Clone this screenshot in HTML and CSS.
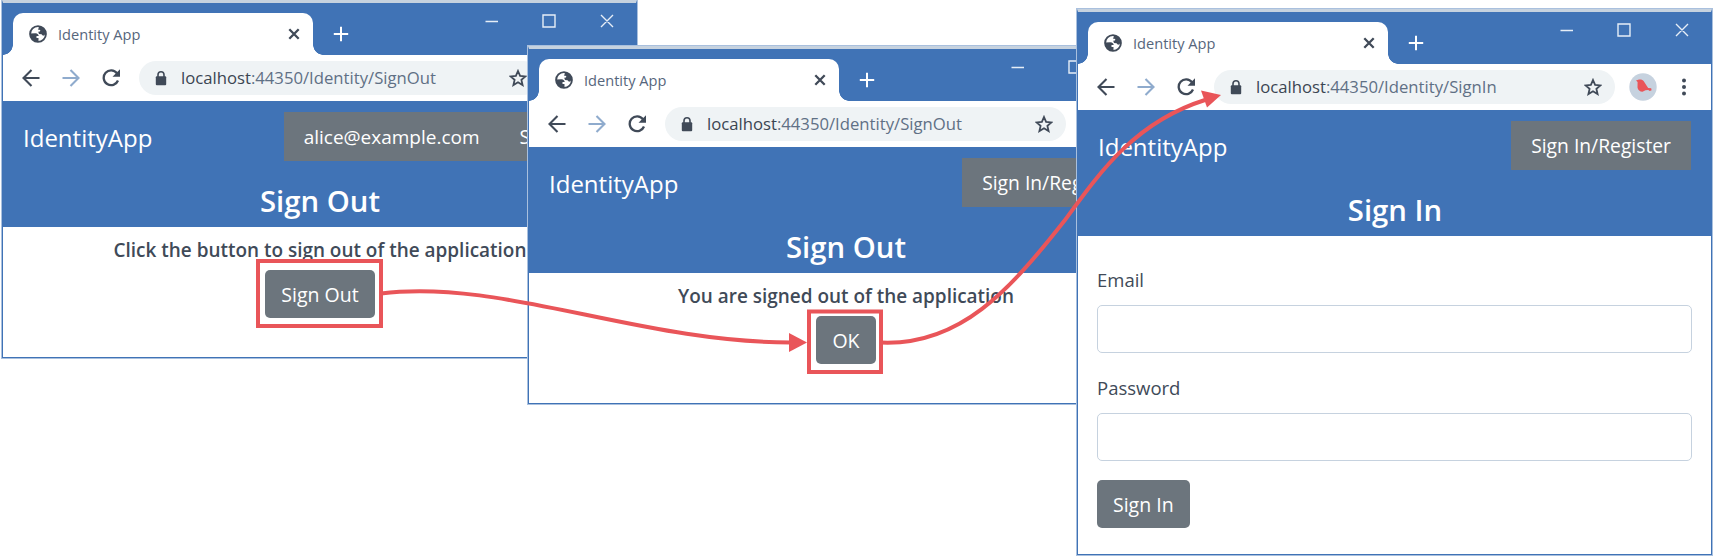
FILE: index.html
```html
<!DOCTYPE html>
<html lang="en">
<head>
<meta charset="utf-8">
<title>Identity App</title>
<link rel="stylesheet" href="styles.css">
</head>
<body>
<svg class="defs" width="0" height="0" aria-hidden="true">
  <symbol id="globe" viewBox="0 0 20 20"><circle class="stroke" cx="10" cy="10" r="7.900" stroke-width="1.900"/><path fill="currentColor" d="M2 9.500l5.500-.3c2 .2 3.200 1.300 3.200 2.800H8.500v2h2v4L7 17.500C3.500 16 2 13 2 9.500zM10.500 2l5 2 2.300 5-1.300 2.300-1.500.5-1.500-1.600-2.500-.2-.8-2.200 1.800-.3.300-1.500-2.500-.4 1-1.500z"/></symbol>
  <symbol id="close" viewBox="0 0 12 12"><path class="stroke" stroke-width="2.300" d="M1.300 1.300l9.400 9.400M10.700 1.300l-9.400 9.400"/></symbol>
  <symbol id="plus" viewBox="0 0 16 16"><path class="stroke" stroke-width="2" d="M8 .8v14.400M.8 8h14.400"/></symbol>
  <symbol id="caption" viewBox="0 0 132 16"><path class="stroke" stroke-width="1.400" d="M1.500 8.500h12.500M59 2h12v12h-12zM117 2l12 12M129 2l-12 12"/></symbol>
  <symbol id="arrow" viewBox="0 0 18 18"><path class="stroke" stroke-width="2.100" d="M17.500 9H1.800M9.500 1L1.500 9l8 8"/></symbol>
  <symbol id="reload" viewBox="0 0 18 18"><path class="stroke" stroke-width="2.300" d="M15 4.300A7.400 7.400 0 1 0 16 11.500"/><path fill="currentColor" d="M18 .3v7.500h-7.500z"/></symbol>
  <symbol id="lock" viewBox="0 0 12 15"><rect x=".8" y="5.200" width="10.400" height="9" rx="1" fill="currentColor"/><path class="stroke" stroke-width="1.600" d="M3 6V3.800a3 3 0 0 1 6 0V6"/></symbol>
  <symbol id="star" viewBox="0 0 18 18"><path class="stroke" stroke-width="1.800" d="M9 2l2.100 4.900 5.300.5-4 3.500 1.200 5.200L9 13.300l-4.600 2.800 1.200-5.200-4-3.500 5.300-.5z"/></symbol>
  <symbol id="bird" viewBox="0 0 28 28"><circle cx="14" cy="14" r="13.700" fill="#c6d2df"/><path fill="#e95559" d="M7 7.500l3-1c2-.3 3.800.3 4.800 1.800l2.700 4.200 1.700 2.500 3 .3.400 2-1.800.6-1.600-1-2.700.4-3 1.500c-2.500-.2-4.700-2-5-4.400L8.600 9z"/></symbol>
  <symbol id="dots" viewBox="0 0 6 18"><circle cx="3" cy="2.500" r="2" fill="currentColor"/><circle cx="3" cy="9" r="2" fill="currentColor"/><circle cx="3" cy="15.500" r="2" fill="currentColor"/></symbol>
</svg>

<main class="stage">
  <section class="window window--confirm">
    <div class="titlebar">
      <div class="tab"><svg class="i-globe"><use href="#globe"/></svg><span class="tab-title">Identity App</span><svg class="i-close"><use href="#close"/></svg></div>
      <svg class="i-plus"><use href="#plus"/></svg>
      <svg class="i-caption"><use href="#caption"/></svg>
    </div>
    <div class="toolbar">
      <svg class="i-nav"><use href="#arrow"/></svg><svg class="i-nav i-forward"><use href="#arrow"/></svg><svg class="i-nav"><use href="#reload"/></svg>
      <div class="address"><svg class="i-lock"><use href="#lock"/></svg><span class="url"><b>localhost</b>:44350/Identity/SignOut</span><svg class="i-star"><use href="#star"/></svg></div>
      <svg class="i-avatar"><use href="#bird"/></svg><svg class="i-dots"><use href="#dots"/></svg>
    </div>
    <header class="banner">
      <nav class="nav"><span class="brand">IdentityApp</span><span class="links"><a class="link link--user">alice@example.com</a><a class="link">Sign Out</a></span></nav>
      <h1 class="heading">Sign Out</h1>
    </header>
    <div class="message-page">
      <p class="message">Click the button to sign out of the application</p>
      <button class="button">Sign Out</button>
    </div>
  </section>

  <section class="window window--done">
    <div class="titlebar">
      <div class="tab"><svg class="i-globe"><use href="#globe"/></svg><span class="tab-title">Identity App</span><svg class="i-close"><use href="#close"/></svg></div>
      <svg class="i-plus"><use href="#plus"/></svg>
      <svg class="i-caption"><use href="#caption"/></svg>
    </div>
    <div class="toolbar">
      <svg class="i-nav"><use href="#arrow"/></svg><svg class="i-nav i-forward"><use href="#arrow"/></svg><svg class="i-nav"><use href="#reload"/></svg>
      <div class="address"><svg class="i-lock"><use href="#lock"/></svg><span class="url"><b>localhost</b>:44350/Identity/SignOut</span><svg class="i-star"><use href="#star"/></svg></div>
      <svg class="i-avatar"><use href="#bird"/></svg><svg class="i-dots"><use href="#dots"/></svg>
    </div>
    <header class="banner">
      <nav class="nav"><span class="brand">IdentityApp</span><span class="links"><a class="link">Sign In/Register</a></span></nav>
      <h1 class="heading">Sign Out</h1>
    </header>
    <div class="message-page">
      <p class="message">You are signed out of the application</p>
      <button class="button">OK</button>
    </div>
  </section>

  <section class="window window--signin">
    <div class="titlebar">
      <div class="tab"><svg class="i-globe"><use href="#globe"/></svg><span class="tab-title">Identity App</span><svg class="i-close"><use href="#close"/></svg></div>
      <svg class="i-plus"><use href="#plus"/></svg>
      <svg class="i-caption"><use href="#caption"/></svg>
    </div>
    <div class="toolbar">
      <svg class="i-nav"><use href="#arrow"/></svg><svg class="i-nav i-forward"><use href="#arrow"/></svg><svg class="i-nav"><use href="#reload"/></svg>
      <div class="address"><svg class="i-lock"><use href="#lock"/></svg><span class="url"><b>localhost</b>:44350/Identity/SignIn</span><svg class="i-star"><use href="#star"/></svg></div>
      <svg class="i-avatar"><use href="#bird"/></svg><svg class="i-dots"><use href="#dots"/></svg>
    </div>
    <header class="banner">
      <nav class="nav"><span class="brand">IdentityApp</span><span class="links"><a class="link">Sign In/Register</a></span></nav>
      <h1 class="heading">Sign In</h1>
    </header>
    <form class="form">
      <label class="label" for="email">Email</label>
      <input class="input" id="email" type="text">
      <label class="label" for="password">Password</label>
      <input class="input" id="password" type="password">
      <button class="button" type="button">Sign In</button>
    </form>
  </section>

  <svg class="flow" viewBox="0 0 1714 557" aria-hidden="true">
    <rect x="258" y="261" width="123" height="65"/>
    <rect x="809" y="311.500" width="72" height="60.500"/>
    <path d="M381 293.500C500 278 640 343 792 342.500"/>
    <path d="M881 342.500C960 346 1010 290 1065 220C1100 172 1135 122 1205 100"/>
    <path class="head" d="M789 333l18 9.500-18 9.500z"/>
    <path class="head" d="M1201 90.500l20 4.500-14 12.500z"/>
  </svg>
</main>
</body>
</html>
```
FILE: styles.css
```css
* { box-sizing: border-box; }

body {
  margin: 0;
  background: #fff;
  color: #404a58;
  font-family: "Open Sans", "Noto Sans", sans-serif;
}

.defs { position: absolute; }
.stroke { fill: none; stroke: currentColor; }

.stage {
  position: relative;
  width: 1714px;
  height: 557px;
  overflow: hidden;
}

/* Browser windows overlap on the stage */
.window {
  position: absolute;
  width: 635px;
  overflow: hidden;
  background: #fff;
  border: solid #4073b6;
  border-width: 3px 1px 1px;
  border-top-color: #c6d2df;
  box-shadow: 0 0 0 1px #a9c0de;
}
.window--confirm { left: 2px; top: 0; height: 358px; }
.window--done { left: 528px; top: 46px; height: 358px; }
.window--signin { left: 1077px; top: 9px; height: 546px; }

.titlebar {
  display: flex;
  height: 52px;
  padding: 10px 0 0 10px;
  background: #4073b6;
  color: #fff;
}

.tab {
  position: relative;
  display: flex;
  align-items: center;
  width: 300px;
  padding: 0 13px 0 15px;
  border-radius: 10px 10px 0 0;
  background: #fff;
  color: #404a58;
}
.tab::before,
.tab::after {
  content: "";
  position: absolute;
  bottom: 0;
  width: 10px;
  height: 10px;
}
.tab::before { left: -10px; background: radial-gradient(circle at 0 0, transparent 9.5px, #fff 10px); }
.tab::after { right: -10px; background: radial-gradient(circle at 100% 0, transparent 9.5px, #fff 10px); }
.tab-title { flex: 1; margin-left: 10px; font-size: 14.6px; line-height: 20px; color: #56667c; }

.i-globe { width: 20px; height: 20px; }
.i-close { width: 12px; height: 12px; }
.i-plus { width: 16px; height: 16px; margin: 13px 0 0 20px; }
.i-caption { width: 132px; height: 16px; margin: 0 0 0 135px; color: #e6eef7; }

.toolbar {
  display: flex;
  align-items: center;
  height: 46px;
  padding-left: 19px;
}
.i-nav { width: 18px; height: 18px; margin-right: 22px; }
.i-forward { color: #8fabcd; transform: scaleX(-1); }

.address {
  display: flex;
  align-items: center;
  width: 401px;
  height: 34px;
  margin-left: -3px;
  padding: 0 13px 0 16px;
  border-radius: 17px;
  background: #eff3f5;
}
.i-lock { width: 12px; height: 15px; }
.url { flex: 1; margin: 0 0 1px 14px; font-size: 16.7px; line-height: 24px; color: #5f7085; }
.url b { font-weight: 400; color: #3b4552; }
.i-star { width: 18px; height: 18px; }
.i-avatar { width: 28px; height: 28px; margin-left: 14px; }
.i-dots { width: 6px; height: 18px; margin-left: 24px; }

.banner { height: 125.5px; padding-top: 11px; background: #4073b6; color: #fff; }
.nav { display: flex; justify-content: space-between; height: 49px; padding: 0 20px; }
.brand { font-size: 24px; line-height: 51px; }
.links { display: flex; background: #6c757d; }
.link { padding: 0 20px; font-size: 19.3px; line-height: 50px; }
.link--user { padding: 0 20px; font-size: 19px; }
.heading { margin: 14px 0 0; padding-left: 1px; font-size: 29.300px; font-weight: 600; line-height: 52px; text-align: center; }

.message-page { padding: 2.5px 0 0 1px; text-align: center; }
.message { margin: 0; font-size: 18.95px; font-weight: 600; line-height: 42px; height: 41px; }

.button {
  display: inline-block;
  height: 48px;
  padding: 0 16px;
  border: 0;
  border-radius: 5px;
  background: #6c757d;
  color: #fff;
  font: 400 19.500px/47px "Open Sans", "Noto Sans", sans-serif;
}

.form { display: flex; flex-direction: column; align-items: flex-start; padding: 29.5px 19px 0; }
.label { height: 40px; font-size: 18.500px; line-height: 30px; }
.input {
  width: 595px;
  height: 48px;
  margin: 0 0 19.5px;
  border: 1px solid #c6d2df;
  border-radius: 5px;
  background: #fff;
}

/* Callouts and arrows drawn over the windows */
.flow { position: absolute; inset: 0; width: 1714px; height: 557px; fill: none; stroke: #e95559; stroke-width: 4; }
.flow .head { fill: #e95559; stroke: none; }
```
